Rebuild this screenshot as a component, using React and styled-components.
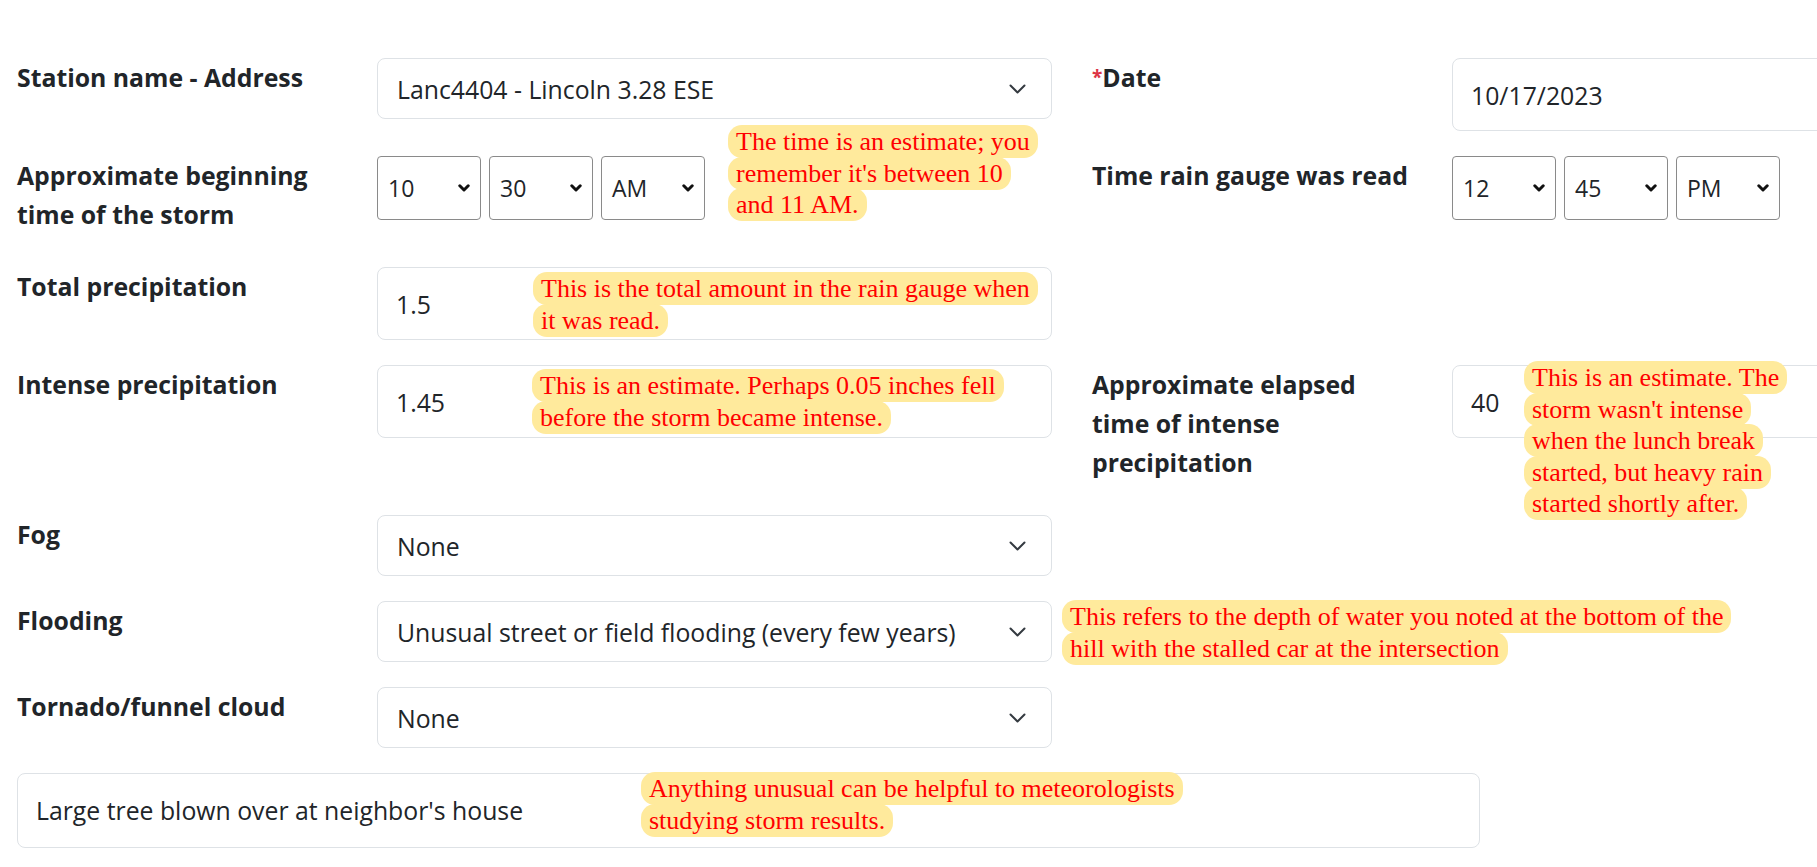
import styled, { createGlobalStyle } from "styled-components";

const GlobalStyle = createGlobalStyle`
  html, body {
    margin: 0;
    padding: 0;
    background: #fff;
    overflow: hidden;
  }
  body {
    font-family: "Open Sans", "Noto Sans", sans-serif;
    color: #212529;
  }
`;

const Chevron = () => (
  <svg width="17" height="10" viewBox="0 0 17 10" fill="none">
    <path d="M1.5 1.5 8.5 8.5 15.5 1.5" stroke="#343a40" strokeWidth="2" strokeLinecap="round" strokeLinejoin="round" />
  </svg>
);

const SmallChevron = () => (
  <svg width="12" height="8" viewBox="0 0 12 8" fill="none">
    <path d="M1.8 1.8 6 6 10.2 1.8" stroke="#111" strokeWidth="3" strokeLinecap="round" strokeLinejoin="round" />
  </svg>
);

const Note = ({ lines, left, top }) => (
  <NoteBox style={{ left, top }}>
    {lines.map((l, i) => (
      <div key={i}>
        <Mark>{l}</Mark>
      </div>
    ))}
  </NoteBox>
);

const Select = ({ value }) => (
  <SelectBox>
    <span>{value}</span>
    <Chevron />
  </SelectBox>
);

const Time = ({ values }) => (
  <TimeRow>
    {values.map((v) => (
      <TimeSelect key={v}>
        <span>{v}</span>
        <SmallChevron />
      </TimeSelect>
    ))}
  </TimeRow>
);

const App = () => {
  return (
    <>
      <GlobalStyle />
      <Form>
        <Row>
          <Label>Station name - Address</Label>
          <Field>
            <Select value="Lanc4404 - Lincoln 3.28 ESE" />
          </Field>
          <Label $right>
            <Req>*</Req>Date
          </Label>
          <Field>
            <Input defaultValue="10/17/2023" />
          </Field>
        </Row>

        <Row>
          <Label>
            Approximate beginning
            <br />
            time of the storm
          </Label>
          <Field>
            <Time values={["10", "30", "AM"]} />
            <Note
              left={351}
              top={-30}
              lines={["The time is an estimate; you", "remember it's between 10", "and 11 AM."]}
            />
          </Field>
          <Label $right>Time rain gauge was read</Label>
          <Field>
            <Time values={["12", "45", "PM"]} />
          </Field>
        </Row>

        <Row>
          <Label>Total precipitation</Label>
          <Field>
            <Input defaultValue="1.5" />
            <Note
              left={156}
              top={6}
              lines={["This is the total amount in the rain gauge when", "it was read."]}
            />
          </Field>
        </Row>

        <Row>
          <Label>Intense precipitation</Label>
          <Field>
            <Input defaultValue="1.45" />
            <Note
              left={155}
              top={5}
              lines={["This is an estimate. Perhaps 0.05 inches fell", "before the storm became intense."]}
            />
          </Field>
          <Label $right>
            Approximate elapsed
            <br />
            time of intense
            <br />
            precipitation
          </Label>
          <Field>
            <Input defaultValue="40" />
            <Note
              left={72}
              top={-3}
              lines={[
                "This is an estimate. The",
                "storm wasn't intense",
                "when the lunch break",
                "started, but heavy rain",
                "started shortly after.",
              ]}
            />
          </Field>
        </Row>

        <Row>
          <Label>Fog</Label>
          <Field>
            <Select value="None" />
          </Field>
        </Row>

        <Row>
          <Label>Flooding</Label>
          <Field>
            <Select value="Unusual street or field flooding (every few years)" />
            <Note
              left={685}
              top={0}
              lines={[
                "This refers to the depth of water you noted at the bottom of the",
                "hill with the stalled car at the intersection",
              ]}
            />
          </Field>
        </Row>

        <Row>
          <Label>Tornado/funnel cloud</Label>
          <Field>
            <Select value="None" />
          </Field>
        </Row>

        <Remarks>
          <Area defaultValue="Large tree blown over at neighbor's house" />
          <Note
            left={624}
            top={0}
            lines={["Anything unusual can be helpful to meteorologists", "studying storm results."]}
          />
        </Remarks>
      </Form>
    </>
  );
};

const Form = styled.form`
  padding: 58px 0 0 17px;
  width: 2200px;
`;

const Row = styled.div`
  display: flex;
  align-items: flex-start;
  margin-bottom: 25px;
`;

const Label = styled.div`
  flex: none;
  width: 360px;
  margin-left: ${(p) => (p.$right ? "40px" : "0")};
  padding-bottom: 8px;
  font-size: 24.8px;
  font-weight: 700;
  line-height: 39px;
  white-space: nowrap;
`;

const Req = styled.span`
  color: #dc3545;
  font-size: 19px;
  vertical-align: 3px;
`;

const Field = styled.div`
  position: relative;
  flex: none;
  width: 675px;
`;

const Input = styled.input`
  display: block;
  box-sizing: border-box;
  width: 100%;
  height: 73px;
  padding: 0 18px;
  border: 1px solid #dee2e6;
  border-radius: 8px;
  font: inherit;
  font-size: 24.8px;
  color: #212529;
  background: #fff;
  outline: none;
`;

const SelectBox = styled.div`
  box-sizing: border-box;
  height: 61px;
  padding: 0 25px 0 19px;
  display: flex;
  align-items: center;
  justify-content: space-between;
  border: 1px solid #dee2e6;
  border-radius: 8px;
  font-size: 24.8px;
  background: #fff;
`;

const TimeRow = styled.div`
  display: flex;
  gap: 8px;
`;

const TimeSelect = styled.div`
  box-sizing: border-box;
  width: 104px;
  height: 64px;
  padding: 0 10px;
  display: flex;
  align-items: center;
  justify-content: space-between;
  border: 1px solid #8a8a8a;
  border-radius: 4px;
  font-size: 23px;
  background: #fff;
`;

const NoteBox = styled.div`
  position: absolute;
  z-index: 2;
  white-space: nowrap;
  font-family: "Liberation Serif", "Times New Roman", serif;
  font-size: 26px;
  line-height: 31.5px;
  color: #ff0000;
`;

const Mark = styled.span`
  background: #ffea9c;
  padding: 2px 8px;
  border-radius: 14px;
  box-decoration-break: clone;
`;

const Remarks = styled.div`
  position: relative;
  width: 1463px;
`;

const Area = styled.textarea`
  display: block;
  box-sizing: border-box;
  width: 100%;
  height: 75px;
  padding: 20px 18px 0;
  border: 1px solid #dee2e6;
  border-radius: 8px;
  font: inherit;
  font-size: 24.8px;
  line-height: 33px;
  color: #212529;
  resize: none;
  outline: none;
  overflow: hidden;
`;

export default App;
